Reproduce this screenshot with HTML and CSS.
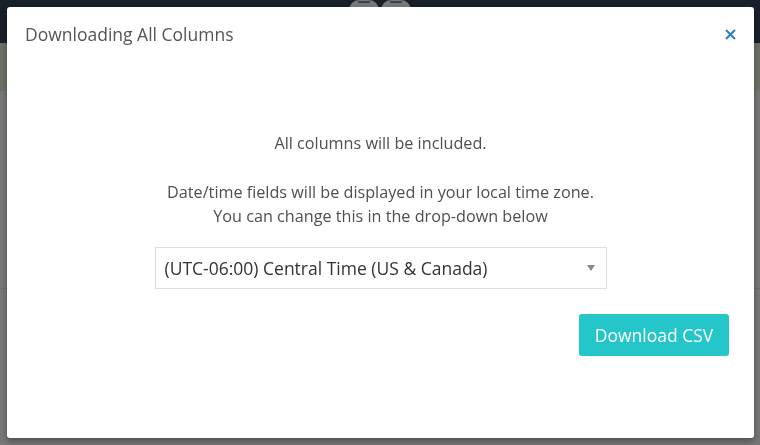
FILE: index.html
```html
<!DOCTYPE html>
<html>
<head>
<meta charset="utf-8">
<link rel="stylesheet" href="styles.css">
</head>
<body>
<div class="page">
  <div class="topbar">
    <div class="logo-mark">
      <span class="lm-part"><i></i></span>
      <span class="lm-part"><i></i></span>
    </div>
  </div>
  <div class="subbar"></div>
  <div class="content">
    <div class="content-top"></div>
    <div class="content-bottom"></div>
  </div>
</div>

<div class="modal">
  <div class="modal-header">
    <h2 class="modal-title">Downloading All Columns</h2>
    <button class="modal-close" aria-label="Close">
      <svg width="11" height="11" viewBox="0 0 11 11"><path d="M1 1L10 10M10 1L1 10" stroke="#2d7cc0" stroke-width="2" stroke-linecap="butt"/></svg>
    </button>
  </div>
  <div class="modal-body">
    <p class="msg">All columns will be included.</p>
    <p class="msg msg-2">Date/time fields will be displayed in your local time zone.<br>You can change this in the drop-down below</p>
    <div class="select">
      <span class="select-value">(UTC-06:00) Central Time (US &amp; Canada)</span>
      <span class="select-arrow"></span>
    </div>
    <div class="actions">
      <button class="btn-primary">Download CSV</button>
    </div>
  </div>
</div>
</body>
</html>
```
FILE: styles.css
```css
html, body {
  margin: 0;
  padding: 0;
}
body {
  width: 760px;
  height: 445px;
  overflow: hidden;
  font-family: "Open Sans", "DejaVu Sans", sans-serif;
  background: #777777;
}
.page {
  display: flex;
  flex-direction: column;
  height: 445px;
}
.topbar {
  height: 43px;
  background: #18202b;
  display: flex;
  justify-content: center;
}
.logo-mark {
  display: flex;
  gap: 2px;
}
.lm-part {
  width: 30px;
  height: 24px;
  background: #777a7d;
  border-radius: 10px;
  display: flex;
  justify-content: center;
  align-items: flex-start;
  padding-top: 1px;
}
.lm-part i {
  display: block;
  width: 12px;
  height: 4px;
  border-top: 2px solid #3b4046;
  border-bottom: 2px solid #3b4046;
}
.subbar {
  height: 48px;
  background: #6b7265;
}
.content {
  flex: 1;
  display: flex;
  flex-direction: column;
}
.content-top {
  height: 197px;
  border-bottom: 1px solid #6c6c6c;
}
.content-bottom {
  flex: 1;
}

.modal {
  position: fixed;
  left: 7px;
  top: 7px;
  width: 747px;
  height: 431px;
  background: #ffffff;
  border-radius: 3px;
  box-shadow: 0 3px 6px rgba(0, 0, 0, 0.35);
  display: flex;
  flex-direction: column;
}
.modal-header {
  display: flex;
  justify-content: space-between;
  align-items: center;
  padding: 16px 18px 0 18px;
  height: 22px;
}
.modal-title {
  margin: 0;
  font-size: 17.5px;
  font-weight: 400;
  color: #555555;
  line-height: 22px;
}
.modal-close {
  border: 0;
  background: none;
  padding: 0;
  width: 11px;
  height: 11px;
  display: flex;
}
.modal-body {
  display: flex;
  flex-direction: column;
  align-items: center;
  padding-top: 86px;
}
.msg {
  margin: 0;
  font-size: 16.2px;
  line-height: 24px;
  color: #4f4f4f;
  text-align: center;
}
.msg-2 {
  margin-top: 25px;
}
.select {
  margin-top: 19px;
  height: 40px;
  border: 1px solid #dddddd;
  display: flex;
  align-items: center;
  justify-content: space-between;
  padding: 0 11px 0 9px;
  box-sizing: content-box;
  width: 430px;
}
.select-value {
  font-size: 17.5px;
  color: #333333;
}
.select-arrow {
  width: 0;
  height: 0;
  border-left: 4px solid transparent;
  border-right: 4px solid transparent;
  border-top: 6px solid #888888;
}
.actions {
  align-self: stretch;
  display: flex;
  justify-content: flex-end;
  padding-right: 25px;
  margin-top: 25px;
}
.btn-primary {
  width: 150px;
  height: 42px;
  border: 0;
  border-radius: 3px;
  background: #24c6c9;
  color: #ffffff;
  font-family: "Open Sans", "DejaVu Sans", sans-serif;
  font-size: 17.5px;
  padding: 0;
}
```
